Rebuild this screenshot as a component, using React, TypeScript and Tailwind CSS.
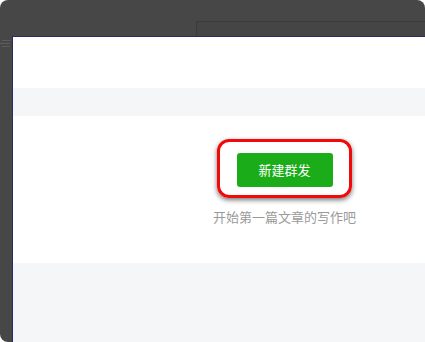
export default function App() {
  return (
    <div className="w-[425px] h-[342px] bg-white overflow-hidden" style={{ fontFamily: '"Noto Sans CJK SC", "Noto Sans", sans-serif' }}>
      <div className="w-full h-full bg-[#474747] rounded-[8px] rounded-br-none flex flex-col overflow-hidden">
        {/* title strip with tab outline */}
        <div className="h-[36px] flex items-end pl-[196px]">
          <div className="flex-1 h-[15px] border-t border-l border-[#3b3b3b] bg-[#454545]" />
        </div>
        <div className="flex-1 flex">
          <div className="w-[12px] pt-[4px] flex flex-col gap-[2px] items-end pr-[2px]">
            <div className="w-[8px] h-px bg-[#5c5c5c]" />
            <div className="w-[10px] h-px bg-[#5c5c5c]" />
            <div className="w-[8px] h-px bg-[#5c5c5c]" />
          </div>
          <div className="flex-1 flex flex-col border-l border-t border-[#2b2b66] bg-white">
            <div className="h-[51px] bg-white" />
            <div className="h-[28px] bg-[#f5f6f8]" />
            <div className="h-[147px] bg-white flex flex-col items-center pl-[131px] pt-[37px]">
              <div className="relative">
                <div className="absolute left-[-20px] right-[-19px] top-[-14px] bottom-[-11px] rounded-[12px] border-[3px] border-[#f20a0a] shadow-[0_2px_5px_rgba(0,0,0,0.55)]" />
                <button className="relative w-[96px] h-[34px] rounded-[3px] bg-[#1aad19] text-white text-[13px] leading-[34px]">
                  新建群发
                </button>
              </div>
              <div className="mt-[21px] text-[13px] leading-[18px] text-[#9a9a9a]">开始第一篇文章的写作吧</div>
            </div>
            <div className="flex-1 bg-[#f5f6f8]" />
          </div>
        </div>
      </div>
    </div>
  );
}
